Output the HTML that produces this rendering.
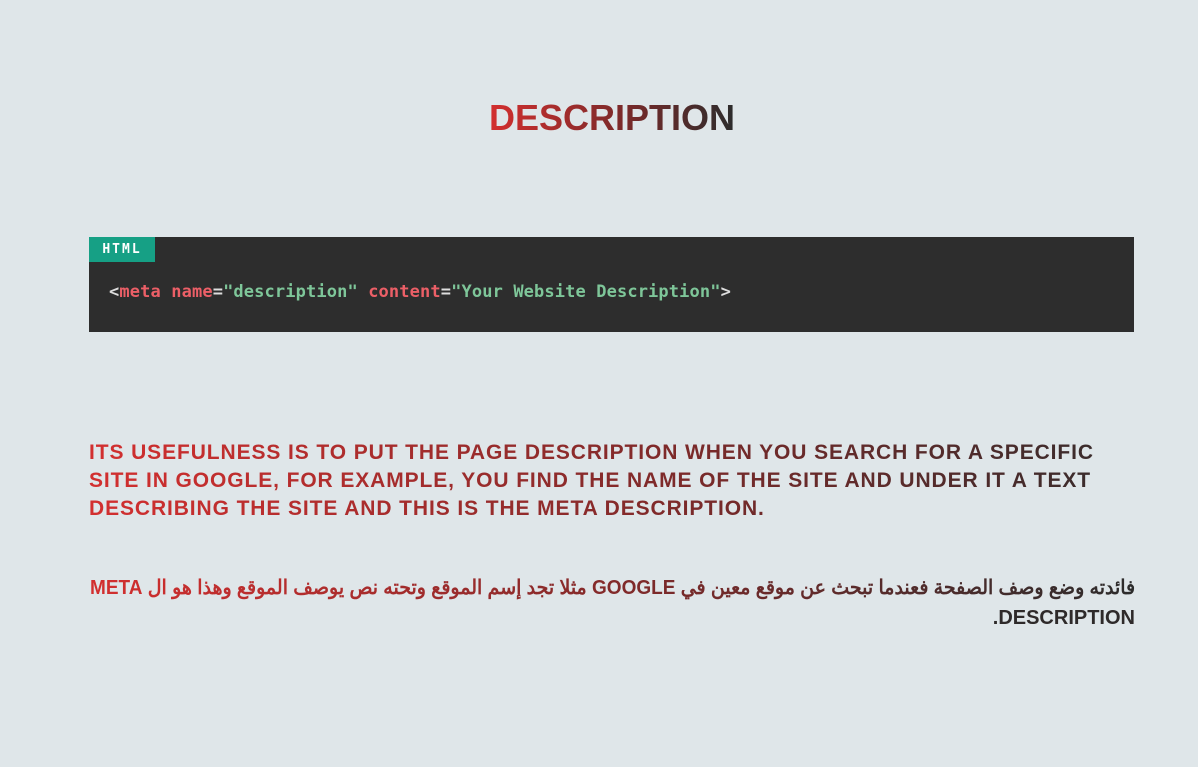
<!DOCTYPE html>
<html><head><meta charset="utf-8"><style>
body{margin:0;background:#dfe6e9;width:1198px;height:767px;overflow:hidden;font-family:"Liberation Sans",Arial,sans-serif}
.g{background:linear-gradient(90deg,#d32f2f 0%,#7a2a2a 55%,#2c2c2c 100%);-webkit-background-clip:text;background-clip:text;color:transparent;font-weight:bold}
h1{position:absolute;left:13px;width:1198px;top:97px;margin:0;text-align:center;font-size:36px;line-height:42px}
h1 span{display:inline-block}
.code{position:absolute;left:89px;top:237px;width:1045px;height:95px;background:#2d2d2d}
.badge{position:absolute;left:0;top:0;width:66px;height:25px;background:#16a085;color:#fff;font:bold 13px "DejaVu Sans Mono",monospace;letter-spacing:2px;line-height:25px;text-align:center}
.line{position:absolute;left:20px;top:45px;font:bold 17px "DejaVu Sans Mono",monospace;letter-spacing:0.13px;color:#ddd;white-space:pre}
.t{color:#ec5f67}.s{color:#7ec699}
p{position:absolute;margin:0;font-size:21px;line-height:28px;text-transform:uppercase}
.p1{left:89px;top:439px;width:1100px;white-space:nowrap;letter-spacing:0.9px}
.ar{position:absolute;right:63px;top:573px;width:1100px;text-align:right;line-height:30px;font-size:20px}
.ar div{white-space:nowrap;height:30px}
.l1{display:inline-block;direction:rtl;transform:scaleX(0.95);transform-origin:right center;white-space:nowrap}
</style></head><body>
<h1><span class="g">DESCRIPTION</span></h1>
<div class="code"><div class="badge">HTML</div>
<div class="line">&lt;<span class="t">meta</span> <span class="t">name</span>=<span class="s">"description"</span> <span class="t">content</span>=<span class="s">"Your Website Description"</span>&gt;</div></div>
<p class="p1 g">Its usefulness is to put the page description when you search for a specific<br>site in Google, for example, you find the name of the site and under it a text<br>describing the site and this is the meta description.</p>
<div class="ar"><div><span class="l1 g">فائدته وضع وصف الصفحة فعندما تبحث عن موقع معين في GOOGLE مثلا تجد إسم الموقع وتحته نص يوصف الموقع وهذا هو ال META</span></div><div><span style="direction:rtl;display:inline-block;font-weight:bold;color:#2e2a2a">DESCRIPTION.</span></div></div>
</body></html>
